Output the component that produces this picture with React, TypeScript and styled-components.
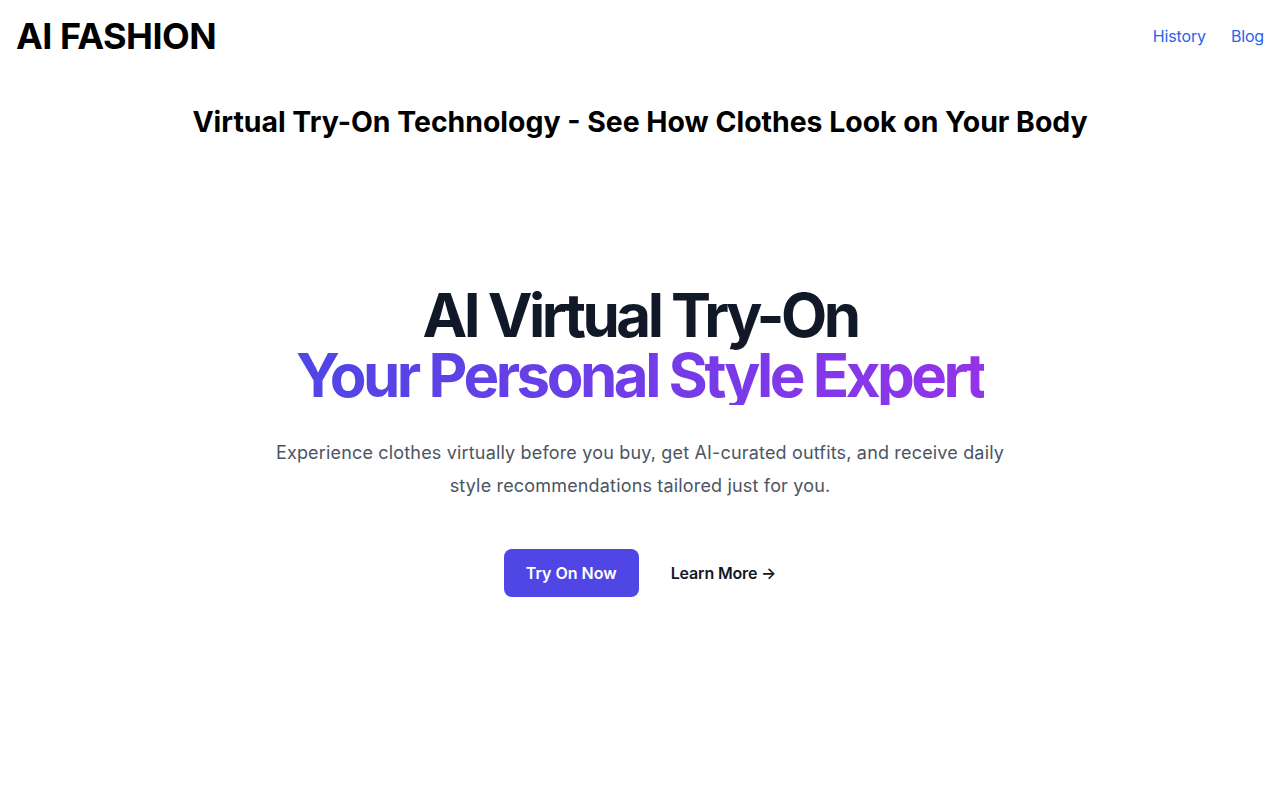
import styled, { createGlobalStyle } from 'styled-components';

const GlobalStyle = createGlobalStyle`
  * { box-sizing: border-box; }
  body {
    margin: 0;
    background: #ffffff;
    font-family: Inter, "Liberation Sans", Arial, sans-serif;
    -webkit-font-smoothing: antialiased;
  }
`;

const Page = styled.div`
  min-height: 100vh;
  display: flex;
  flex-direction: column;
`;

const TopBar = styled.header`
  display: flex;
  align-items: center;
  justify-content: space-between;
  padding: 0 16px;
  height: 72px;
`;

const Logo = styled.h1`
  margin: 0;
  font-size: 36px;
  font-weight: 700;
  letter-spacing: -0.015em;
  color: #000000;
`;

const Nav = styled.nav`
  display: flex;
  gap: 25px;
`;

const NavLink = styled.a`
  font-size: 16px;
  letter-spacing: -0.01em;
  color: #2563eb;
  text-decoration: none;
  cursor: pointer;
`;

const Tagline = styled.h2`
  margin: 34px 0 0 0;
  text-align: center;
  font-size: 28.4px;
  line-height: 32px;
  font-weight: 700;
  color: #000000;
`;

const Hero = styled.section`
  display: flex;
  flex-direction: column;
  align-items: center;
  text-align: center;
  padding-top: 147px;
`;

const Title = styled.h1`
  margin: 0;
  font-size: 60px;
  line-height: 60px;
  font-weight: 700;
  letter-spacing: -3.5px;
  color: #111827;
`;

const GradientLine = styled.span`
  display: block;
  background: linear-gradient(to right, #4f46e5, #9333ea);
  -webkit-background-clip: text;
  background-clip: text;
  color: transparent;
`;

const Lead = styled.p`
  margin: 31px 0 0 0;
  max-width: 740px;
  font-size: 18px;
  line-height: 33px;
  letter-spacing: 0.17px;
  color: #4b5563;
`;

const Actions = styled.div`
  display: flex;
  align-items: center;
  gap: 32px;
  margin-top: 47px;
`;

const PrimaryButton = styled.a`
  display: inline-block;
  padding: 12px 22px;
  border-radius: 8px;
  background: #4f46e5;
  color: #ffffff;
  font-size: 16px;
  line-height: 24px;
  font-weight: 600;
  text-decoration: none;
  cursor: pointer;
`;

const TextButton = styled.a`
  font-size: 16px;
  line-height: 24px;
  font-weight: 600;
  letter-spacing: -0.01em;
  color: #111827;
  text-decoration: none;
  cursor: pointer;
`;

export default function App() {
  return (
    <Page>
      <GlobalStyle />
      <TopBar>
        <Logo>AI FASHION</Logo>
        <Nav>
          <NavLink>History</NavLink>
          <NavLink>Blog</NavLink>
        </Nav>
      </TopBar>
      <Tagline>Virtual Try-On Technology - See How Clothes Look on Your Body</Tagline>
      <Hero>
        <Title>
          AI Virtual Try-On
          <GradientLine>Your Personal Style Expert</GradientLine>
        </Title>
        <Lead>
          Experience clothes virtually before you buy, get AI-curated outfits, and receive daily
          style recommendations tailored just for you.
        </Lead>
        <Actions>
          <PrimaryButton>Try On Now</PrimaryButton>
          <TextButton>Learn More →</TextButton>
        </Actions>
      </Hero>
    </Page>
  );
}
